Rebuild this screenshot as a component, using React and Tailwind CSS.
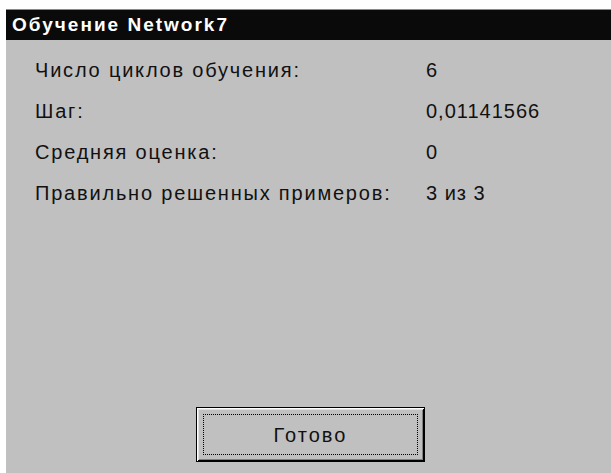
const STATS = [
  { label: "Число циклов обучения:", value: "6" },
  { label: "Шаг:", value: "0,01141566" },
  { label: "Средняя оценка:", value: "0" },
  { label: "Правильно решенных примеров:", value: "3 из 3" },
];

export default function App() {
  return (
    <div
      className="h-[473px] w-[611px] overflow-hidden bg-white pl-[6px] pt-[9px]"
      style={{ fontFamily: '"Liberation Sans", Arial, sans-serif' }}
    >
      <div className="flex h-full flex-col border-t border-[#8a8a8a] bg-[#c0c0c0]">
        {/* title bar */}
        <div className="flex h-[30px] items-center bg-[#0a0a0a] pl-[6px] text-[19px] font-bold tracking-[2px] text-white">
          Обучение Network7
        </div>

        <div className="flex flex-1 flex-col pl-[29px] pt-[9px]">
          {STATS.map((s) => (
            <div
              key={s.label}
              className="flex h-[41px] items-center text-[20px] text-[#111]"
            >
              <span className="w-[391px] tracking-[1.8px]">{s.label}</span>
              <span className="tracking-[1px]">{s.value}</span>
            </div>
          ))}
        </div>

        <div className="mb-[11px] pl-[190px]">
          <button className="flex h-[55px] w-[229px] border border-black bg-[#c0c0c0] p-[6px] shadow-[inset_1px_1px_#fff,inset_-1px_-1px_#000,inset_2px_2px_#dfdfdf,inset_-2px_-2px_#808080]">
            <span className="flex h-full w-full items-center justify-center border border-dotted border-black text-[20px] tracking-[2px] text-[#111]">
              Готово
            </span>
          </button>
        </div>
      </div>
    </div>
  );
}
